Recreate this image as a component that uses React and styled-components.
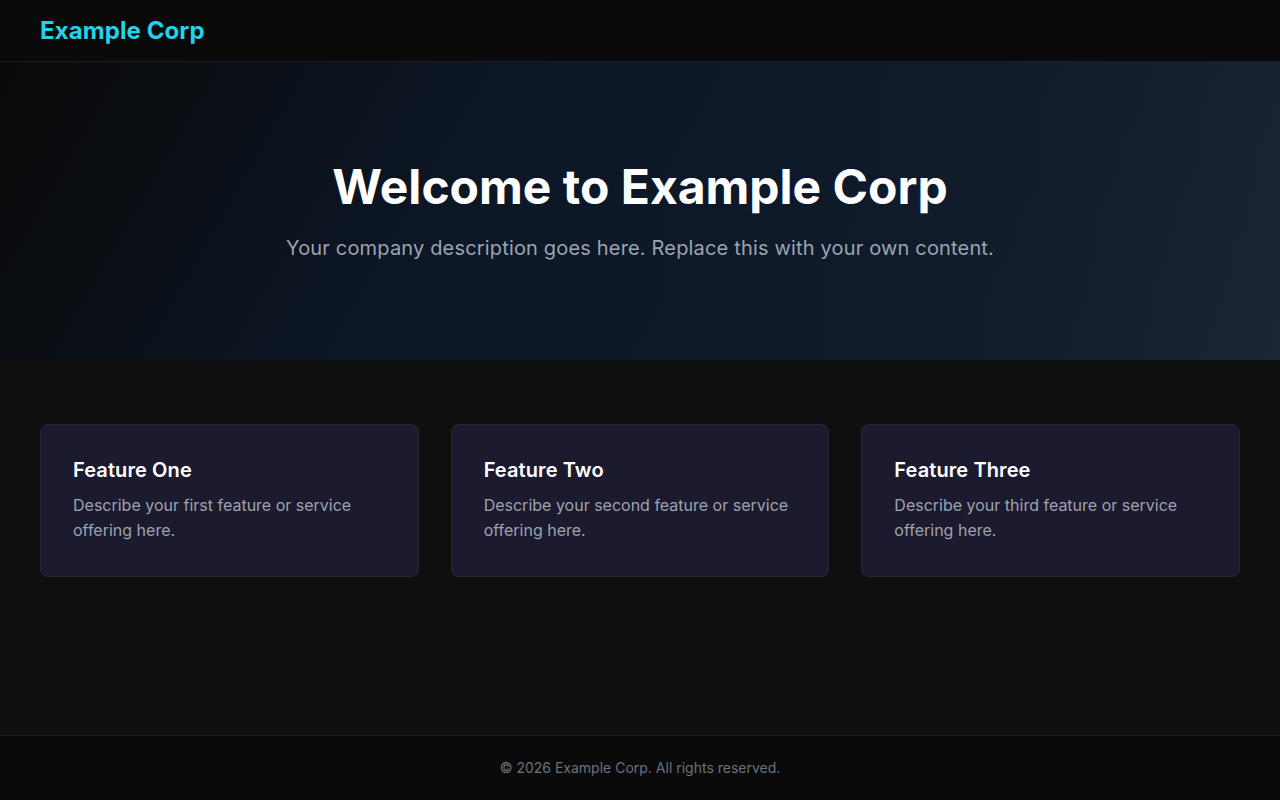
import styled, { createGlobalStyle } from 'styled-components'

const GlobalStyle = createGlobalStyle`
  * {
    box-sizing: border-box;
  }

  body {
    margin: 0;
    background: #0f0f0f;
    font-family: Inter, 'Noto Sans', sans-serif;
    color: #ffffff;
  }
`

const features = [
  { title: 'Feature One', text: 'Describe your first feature or service offering here.' },
  { title: 'Feature Two', text: 'Describe your second feature or service offering here.' },
  { title: 'Feature Three', text: 'Describe your third feature or service offering here.' },
]

const App = () => {
  return (
    <Page>
      <GlobalStyle />
      <Header>
        <Logo>Example Corp</Logo>
      </Header>
      <Hero>
        <HeroTitle>Welcome to Example Corp</HeroTitle>
        <HeroText>Your company description goes here. Replace this with your own content.</HeroText>
      </Hero>
      <Main>
        <Grid>
          {features.map((f) => (
            <Card key={f.title}>
              <CardTitle>{f.title}</CardTitle>
              <CardText>{f.text}</CardText>
            </Card>
          ))}
        </Grid>
      </Main>
      <Footer>© 2026 Example Corp. All rights reserved.</Footer>
    </Page>
  )
}

export default App

const Page = styled.div`
  display: flex;
  flex-direction: column;
  min-height: 100vh;
`

const Header = styled.header`
  height: 62px;
  display: flex;
  align-items: center;
  padding: 0 40px;
  background: #0a0a0a;
  border-bottom: 1px solid #1c1c28;
`

const Logo = styled.div`
  color: #22d3ee;
  font-size: 24px;
  font-weight: 700;
  letter-spacing: 0.1px;
`

const Hero = styled.section`
  padding: 96px 40px 97px;
  text-align: center;
  background: linear-gradient(120deg, #0a0a0a 0%, #0c1828 40%, #13203200 100%),
    linear-gradient(90deg, #0a0c10 0%, #0e1a2a 50%, #1a2535 100%);
`

const HeroTitle = styled.h1`
  margin: 0;
  font-size: 48px;
  line-height: 1.2;
  font-weight: 700;
  color: #ffffff;
`

const HeroText = styled.p`
  margin: 17px 0 0;
  font-size: 20px;
  line-height: 1.5;
  letter-spacing: 0.17px;
  color: #9ca3af;
`

const Main = styled.main`
  flex: 1;
  padding: 64px 40px;
`

const Grid = styled.div`
  display: grid;
  grid-template-columns: repeat(3, 1fr);
  gap: 32px;
`

const Card = styled.div`
  background: #1c1a2e;
  border: 1px solid #2a2838;
  border-radius: 8px;
  padding: 32px;
`

const CardTitle = styled.h3`
  margin: 0 0 10px;
  font-size: 20px;
  line-height: 26px;
  font-weight: 600;
  letter-spacing: 0.1px;
  color: #ffffff;
`

const CardText = styled.p`
  margin: 0;
  font-size: 16px;
  line-height: 1.6;
  color: #9ca3af;
`

const Footer = styled.footer`
  padding: 22px 40px;
  text-align: center;
  font-size: 14px;
  line-height: 20px;
  color: #6b7280;
  background: #0a0a0a;
  border-top: 1px solid #1c1c22;
`
